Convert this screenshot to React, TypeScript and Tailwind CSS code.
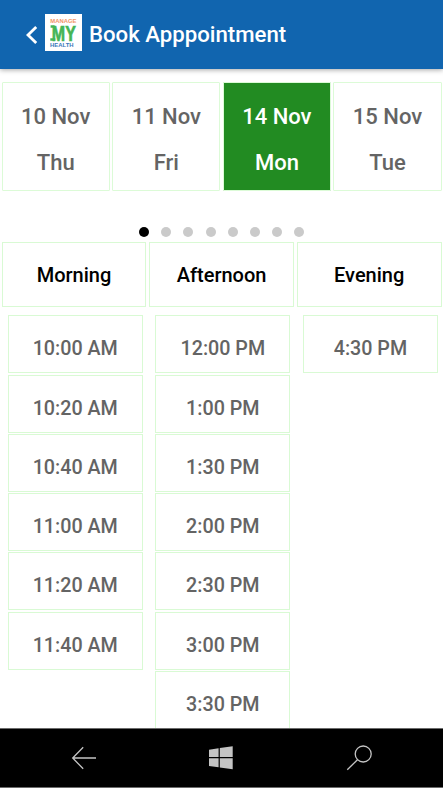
import clsx from 'clsx';

interface DayOption {
    date: string;
    weekday: string;
}

interface Session {
    label: string;
    slots: string[];
}

const DAYS: DayOption[] = [
    { date: '10 Nov', weekday: 'Thu' },
    { date: '11 Nov', weekday: 'Fri' },
    { date: '14 Nov', weekday: 'Mon' },
    { date: '15 Nov', weekday: 'Tue' },
];

const SESSIONS: Session[] = [
    { label: 'Morning', slots: ['10:00 AM', '10:20 AM', '10:40 AM', '11:00 AM', '11:20 AM', '11:40 AM'] },
    { label: 'Afternoon', slots: ['12:00 PM', '1:00 PM', '1:30 PM', '2:00 PM', '2:30 PM', '3:00 PM', '3:30 PM'] },
    { label: 'Evening', slots: ['4:30 PM'] },
];

const PAGE_COUNT = 8;

function Logo() {
    return (
        <svg viewBox="0 0 37 37" className="ml-[7px] h-[37px] w-[37px] bg-white font-['Liberation_Sans']">
            <text x="5.3" y="8.8" fontSize="5.8" fontWeight="700" fill="#f09468" textLength="26.2" lengthAdjust="spacingAndGlyphs">MANAGE</text>
            <text x="6.8" y="26.6" fontSize="22" fontWeight="700" fill="#44b556" stroke="#44b556" strokeWidth="0.7" textLength="24" lengthAdjust="spacingAndGlyphs">MY</text>
            <path d="M5.6 11.2h4v2.6h-4zM5.3 24.2h5v2.6h-5z" fill="#44b556" />
            <text x="5" y="32.7" fontSize="6" fontWeight="700" fill="#3a78ba" textLength="23.5" lengthAdjust="spacingAndGlyphs">HEALTH</text>
        </svg>
    );
}

function Header() {
    return (
        <header className="relative flex h-[69px] shrink-0 items-center bg-[#1165af] pl-[26px] shadow-[0_1px_5px_rgba(0,0,0,0.35)]">
            <button type="button" aria-label="Back" className="mt-[1px]">
                <svg viewBox="0 0 12 20" className="h-5 w-3" fill="none" stroke="white" strokeWidth="2.8">
                    <path d="M10.2 1.9 2 10l8.2 8.1" />
                </svg>
            </button>
            <div className="mb-[4px]"><Logo /></div>
            <h1 className="mb-[2px] ml-[7px] text-[22.2px] leading-7 font-medium whitespace-nowrap text-white">Book Apppointment</h1>
        </header>
    );
}

function DayCard({ day, selected }: { day: DayOption; selected: boolean }) {
    return (
        <button
            type="button"
            className={clsx(
                'flex h-[109px] flex-col items-center rounded-[1px] border border-[#dcfbd7] pt-[11px] text-[22px] leading-[46px] font-medium',
                selected ? 'bg-[#228b22] text-white' : 'text-[#646464]'
            )}
        >
            <span>{day.date}</span>
            <span>{day.weekday}</span>
        </button>
    );
}

function SessionColumn({ session }: { session: Session }) {
    return (
        <section className="flex flex-col">
            <h2 className="flex h-[64.5px] items-center justify-center border border-[#d9fad4] text-[20px] font-medium text-black">{session.label}</h2>
            <div className="mt-[8.5px] flex flex-col gap-[1.25px] pr-[3.5px] pl-[6px]">
                {session.slots.map((slot) => (
                    <button key={slot} type="button" className="h-[58px] shrink-0 border border-[#d9fad4] pt-[10px] text-[19.7px] leading-6 font-medium text-[#646464]">
                        {slot}
                    </button>
                ))}
            </div>
        </section>
    );
}

function SystemBar() {
    return (
        <nav className="relative flex h-[60px] shrink-0 items-center border-y border-[#6b6b6b] bg-black text-[#c4c4c4]">
            <svg viewBox="0 0 26 24" className="ml-[71px] h-6 w-[26px]" fill="none" stroke="currentColor" strokeWidth="1.3">
                <path d="M12.2 1.2 1.7 12l10.5 10.8M1.7 12H25" />
            </svg>
            <svg viewBox="0 0 24 24" className="ml-[112px] h-6 w-6" fill="currentColor">
                <path d="M0 3.7 9.6 2.3v8.8H0zM10.8 2.1 23.7.2v10.9H10.8zM0 12.3h9.6v9L0 19.9zM10.8 12.3h12.9v11L10.8 21.5z" />
            </svg>
            <svg viewBox="0 0 26 26" className="ml-[113px] h-[26px] w-[26px]" fill="none" stroke="currentColor" strokeWidth="1.3">
                <circle cx="17.2" cy="9" r="8" />
                <path d="M11.5 14.7 1.3 24.8" />
            </svg>
        </nav>
    );
}

export default function App() {
    return (
        <div className="flex h-[788px] w-[443px] flex-col overflow-hidden bg-white font-[Roboto,sans-serif]">
            <Header />
            <main className="min-h-0 flex-1 overflow-hidden pt-[13px] pr-[1.5px] pl-[1.7px]">
                <div className="grid grid-cols-4 gap-[2.6px]">
                    {DAYS.map((day) => (
                        <DayCard key={day.date} day={day} selected={day.date === '14 Nov'} />
                    ))}
                </div>
                <div className="mt-[36px] flex justify-center gap-[12.1px]">
                    {Array.from({ length: PAGE_COUNT }, (_, i) => (
                        <span key={i} className={clsx('size-[10px] rounded-full', i === 0 ? 'bg-black' : 'bg-[#cacaca]')} />
                    ))}
                </div>
                <div className="mt-[5.4px] grid grid-cols-3 gap-[3px]">
                    {SESSIONS.map((session) => (
                        <SessionColumn key={session.label} session={session} />
                    ))}
                </div>
            </main>
            <SystemBar />
        </div>
    );
}
